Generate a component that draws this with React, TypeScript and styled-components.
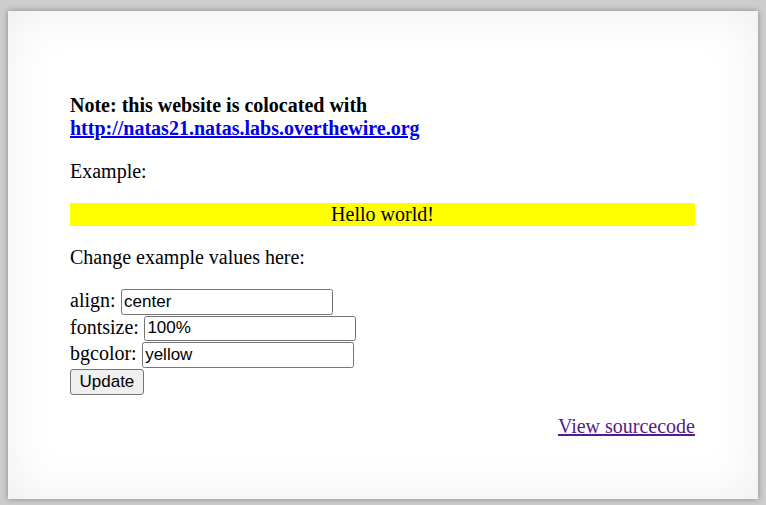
import React from "react";
import styled, { createGlobalStyle } from "styled-components";

const GlobalStyle = createGlobalStyle`
  html, body {
    margin: 0;
    padding: 0;
    background: #cdcdcd;
  }
  body {
    font-family: "Liberation Serif", "Times New Roman", serif;
    font-size: 20px;
  }
`;

const Page = styled.div`
  padding: 11px 8px 6px;
`;

const Content = styled.div`
  box-sizing: border-box;
  height: 488px;
  background: #fff;
  padding: 83px 63px 0 62px;
  box-shadow: 0 0 6px rgba(0, 0, 0, 0.35), inset 0 0 50px rgba(0, 0, 0, 0.07);
`;

const Para = styled.p`
  margin: 0 0 20px;
`;

const Note = styled(Para)`
  font-weight: bold;

  a {
    color: #0000ee;
  }
`;

const Example = styled.div<{ $align: string; $bg: string; $size: string }>`
  text-align: ${(p) => p.$align};
  background-color: ${(p) => p.$bg};
  font-size: ${(p) => p.$size};
  margin-bottom: 20px;
`;

const Form = styled.form`
  margin: 0;
`;

const Field = styled.div`
  height: 26.5px;
  line-height: 23px;
`;

const TextInput = styled.input`
  box-sizing: border-box;
  width: 212px;
  height: 25.5px;
  padding: 1px 2.5px;
  border: 1px solid #767676;
  border-radius: 2.5px;
  font-family: "Liberation Sans", Arial, sans-serif;
  font-size: 17px;
  color: #000;
  background: #fff;
  vertical-align: top;
`;

const Button = styled.button`
  box-sizing: border-box;
  height: 26.5px;
  padding: 1px 8.5px;
  border: 1px solid #767676;
  border-radius: 3px;
  background: #efefef;
  font-family: "Liberation Sans", Arial, sans-serif;
  font-size: 17px;
  color: #000;
  vertical-align: top;
`;

const SourceRow = styled.div`
  margin-top: 20px;
  text-align: right;

  a {
    color: #551a8b;
  }
`;

export default function App() {
  return (
    <>
      <GlobalStyle />
      <Page>
        <Content>
          <Note>
            Note: this website is colocated with{" "}
            <a href="#">http://natas21.natas.labs.overthewire.org</a>
          </Note>
          <Para>Example:</Para>
          <Example $align="center" $bg="yellow" $size="100%">
            Hello world!
          </Example>
          <Para>Change example values here:</Para>
          <Form onSubmit={(e) => e.preventDefault()}>
            <Field>
              align: <TextInput name="align" defaultValue="center" />
            </Field>
            <Field>
              fontsize: <TextInput name="fontsize" defaultValue="100%" />
            </Field>
            <Field>
              bgcolor: <TextInput name="bgcolor" defaultValue="yellow" />
            </Field>
            <Field>
              <Button type="submit">Update</Button>
            </Field>
          </Form>
          <SourceRow>
            <a href="#">View sourcecode</a>
          </SourceRow>
        </Content>
      </Page>
    </>
  );
}
